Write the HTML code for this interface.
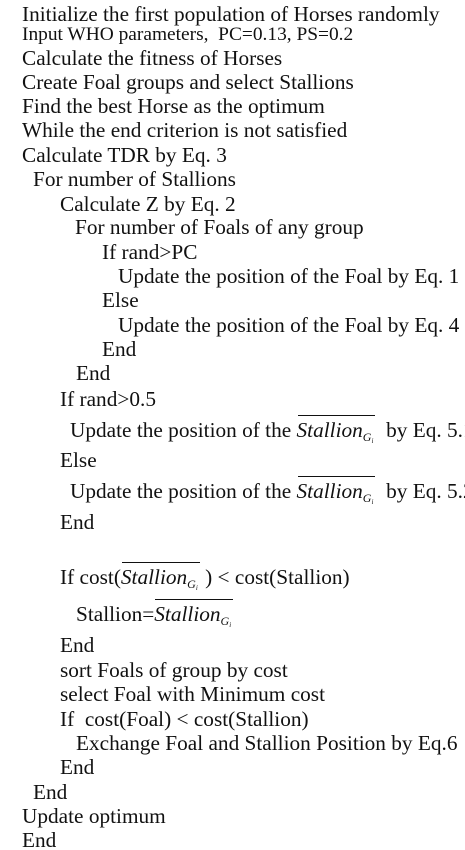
<!DOCTYPE html>
<html><head><meta charset="utf-8"><style>
html,body{margin:0;padding:0;background:#fff;width:465px;height:850px;overflow:hidden;position:relative}
.l{position:absolute;font-family:"Liberation Serif",serif;font-size:21.3px;line-height:20px;color:#111;white-space:pre}
.s{font-size:19.4px;line-height:18px}
.st{position:relative;font-style:italic;display:inline-block;padding-right:2px}
.st::before{content:"";position:absolute;left:1px;right:0;top:-5px;border-top:1.3px solid #111}
.st sub{font-size:12px;vertical-align:-4px;font-style:italic}
.st sub i{font-size:7px;vertical-align:-2px}
</style></head><body>
<div class="l" style="left:22px;top:4px">Initialize the first population of Horses randomly</div>
<div class="l s" style="left:22px;top:26px">Input WHO parameters,  PC=0.13, PS=0.2</div>
<div class="l" style="left:22px;top:48px">Calculate the fitness of Horses</div>
<div class="l" style="left:22px;top:72px">Create Foal groups and select Stallions</div>
<div class="l" style="left:22px;top:96px">Find the best Horse as the optimum</div>
<div class="l" style="left:22px;top:120px">While the end criterion is not satisfied</div>
<div class="l" style="left:22px;top:145px">Calculate TDR by Eq. 3</div>
<div class="l" style="left:33px;top:169px">For number of Stallions</div>
<div class="l" style="left:60px;top:194px">Calculate Z by Eq. 2</div>
<div class="l" style="left:75px;top:217px">For number of Foals of any group</div>
<div class="l" style="left:102px;top:242px">If rand&gt;PC</div>
<div class="l" style="left:118px;top:266px">Update the position of the Foal by Eq. 1</div>
<div class="l" style="left:102px;top:290px">Else</div>
<div class="l" style="left:118px;top:315px">Update the position of the Foal by Eq. 4</div>
<div class="l" style="left:102px;top:339px">End</div>
<div class="l" style="left:76px;top:363px">End</div>
<div class="l" style="left:60px;top:389px">If rand&gt;0.5</div>
<div class="l" style="left:70px;top:420px">Update the position of the <span class="st">Stallion<sub>G<i>i</i></sub></span>  by Eq. 5.1</div>
<div class="l" style="left:60px;top:450px">Else</div>
<div class="l" style="left:70px;top:481px">Update the position of the <span class="st">Stallion<sub>G<i>i</i></sub></span>  by Eq. 5.2</div>
<div class="l" style="left:60px;top:512px">End</div>
<div class="l" style="left:60px;top:567px">If cost(<span class="st">Stallion<sub>G<i>i</i></sub></span> ) &lt; cost(Stallion)</div>
<div class="l" style="left:76px;top:604px">Stallion=<span class="st">Stallion<sub>G<i>i</i></sub></span></div>
<div class="l" style="left:60px;top:635px">End</div>
<div class="l" style="left:60px;top:660px">sort Foals of group by cost</div>
<div class="l" style="left:60px;top:684px">select Foal with Minimum cost</div>
<div class="l" style="left:60px;top:709px">If  cost(Foal) &lt; cost(Stallion)</div>
<div class="l" style="left:76px;top:733px">Exchange Foal and Stallion Position by Eq.6</div>
<div class="l" style="left:60px;top:757px">End</div>
<div class="l" style="left:33px;top:782px">End</div>
<div class="l" style="left:22px;top:806px">Update optimum</div>
<div class="l" style="left:22px;top:830px">End</div>
</body></html>
